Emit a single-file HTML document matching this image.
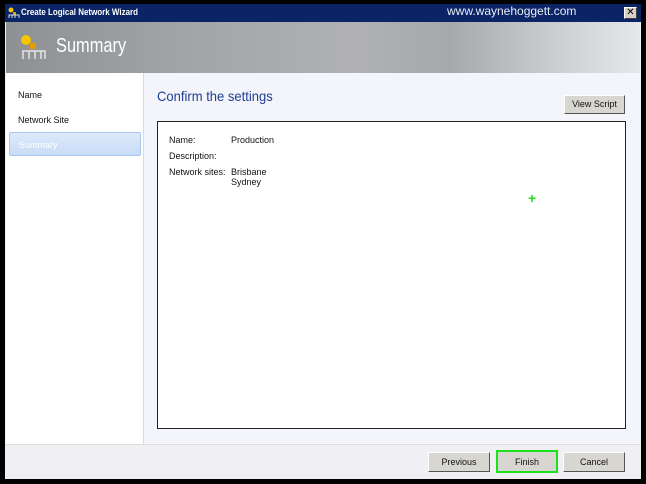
<!DOCTYPE html>
<html><head><style>
*{margin:0;padding:0;box-sizing:border-box}
body{width:646px;height:484px;background:#000;position:relative;overflow:hidden;font-family:"Liberation Sans",sans-serif;font-size:9px;color:#111}
.win{position:absolute;left:5px;top:4px;width:636px;height:475px;background:#f4f5fb}
.title{position:absolute;left:0;top:0;width:636px;height:18px;background:#0a2466;color:#fff;font-size:9.5px;line-height:18px}
.tt{position:absolute;left:16px;top:0;font-weight:bold;transform:scaleX(0.84);transform-origin:left}
.wm{position:absolute;left:442px;top:0;color:#e8ecf4;font-size:12px;font-weight:normal;line-height:14px}
.x{position:absolute;right:4px;top:3px;width:13px;height:12px;background:#d4d0c8;border:1px solid #fff;border-right-color:#404040;border-bottom-color:#404040;color:#000;font-size:10px;line-height:10px;text-align:center}
.hdr{position:absolute;left:1px;top:18px;width:634px;height:51px;background:linear-gradient(90deg,#8e9194 0%,#a3a5a8 30%,#b0b1b4 55%,#a6a8ab 70%,#c9cacc 85%,#e6e7e9 100%)}
.hdr span{position:absolute;left:50px;top:13px;color:#fff;font-size:20px;transform:scaleX(0.82);transform-origin:left}
.nav{position:absolute;left:1px;top:69px;width:138px;height:371px;background:#fff;border-right:1px solid #d8dae0}
.nav div{position:absolute;left:12px;font-size:9px}
.sel{position:absolute;left:3px;top:59px;width:132px;height:24px;background:linear-gradient(#dfeafb,#c6dcf7);border:1px solid #a9c6ee;border-radius:2px;color:#fff;padding:7px 9px}
h1{position:absolute;left:152px;top:84px;font-size:14px;font-weight:normal;color:#1f3e94;transform:scaleX(0.93);transform-origin:left}
.btn{position:absolute;background:#d8d6d0;border:1px solid #fff;border-right-color:#555;border-bottom-color:#555;font-size:9px;text-align:center}
.box{position:absolute;left:152px;top:117px;width:469px;height:308px;background:#fff;border:1px solid #222}
.box div{position:absolute;font-size:9px}
.foot{position:absolute;left:0;top:440px;width:636px;height:35px;background:#f0f0f4;border-top:1px solid #ddd}
</style></head><body>
<div class="win">
<div class="title"><svg style="position:absolute;left:3px;top:3px" width="12" height="12"><circle cx="3" cy="3" r="2.5" fill="#f5c400"/><rect x="5" y="5" width="3" height="3" fill="#e8a000"/><path d="M1 11V8h10v3M4 8v3M7 8v3" stroke="#ddd" fill="none"/></svg><span class="tt">Create Logical Network Wizard</span><span class="wm">www.waynehoggett.com</span><div class="x">✕</div></div>
<div class="hdr"><svg style="position:absolute;left:14px;top:12px" width="28" height="26"><circle cx="6" cy="6" r="5" fill="#f7c400"/><rect x="10" y="9" width="6" height="6" fill="#e39b00"/><path d="M3 25V17h22v8M9 17v8M15 17v8M21 17v8" stroke="#e4e4e4" stroke-width="1.5" fill="none"/></svg><span>Summary</span></div>
<div class="nav"><div style="top:17px">Name</div><div style="top:42px">Network Site</div><div class="sel" style="left:3px">Summary</div></div>
<h1>Confirm the settings</h1>
<div class="btn" style="left:559px;top:91px;width:61px;height:19px;line-height:17px">View Script</div>
<div class="box">
<div style="left:11px;top:13px">Name:</div><div style="left:73px;top:13px">Production</div>
<div style="left:11px;top:29px">Description:</div>
<div style="left:11px;top:45px">Network sites:</div><div style="left:73px;top:45px;line-height:10px">Brisbane<br>Sydney</div>
<div style="left:370px;top:68px;color:#2d2;font-size:14px;font-weight:bold">+</div>
</div>
<div class="foot">
<div class="btn" style="left:423px;top:7px;width:62px;height:20px;line-height:18px">Previous</div>
<div class="btn" style="left:491px;top:5px;width:62px;height:23px;line-height:21px;border:2px solid #1be01b">Finish</div>
<div class="btn" style="left:558px;top:7px;width:62px;height:20px;line-height:18px">Cancel</div>
</div>
</div>
</body></html>
